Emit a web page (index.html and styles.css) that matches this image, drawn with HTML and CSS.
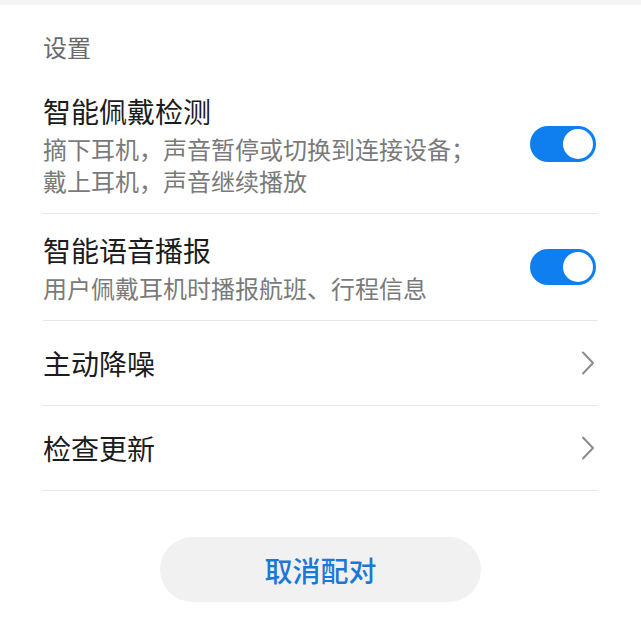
FILE: index.html
```html
<!DOCTYPE html>
<html lang="zh-CN">

<head>
    <meta charset="UTF-8">
    <meta name="viewport" content="width=device-width, initial-scale=1.0">
    <title>设置</title>
    <link rel="stylesheet" href="styles.css">
</head>

<body>
    <div class="topbar"></div>
    <div class="main">
        <h2 class="heading">设置</h2>

        <div class="row">
            <div class="text">
                <div class="title">智能佩戴检测</div>
                <div class="sub">摘下耳机，声音暂停或切换到连接设备；<br>戴上耳机，声音继续播放</div>
            </div>
            <div class="toggle on"><span class="knob"></span></div>
        </div>

        <div class="row">
            <div class="text">
                <div class="title">智能语音播报</div>
                <div class="sub">用户佩戴耳机时播报航班、行程信息</div>
            </div>
            <div class="toggle on"><span class="knob"></span></div>
        </div>

        <div class="row single">
            <div class="title">主动降噪</div>
            <svg class="arrow" width="14" height="24" viewBox="0 0 14 24">
                <path d="M2 1.5 L12 12 L2 22.5" fill="none" stroke="#8c8c8c" stroke-width="2" stroke-linecap="round" stroke-linejoin="round"/>
            </svg>
        </div>

        <div class="row single">
            <div class="title">检查更新</div>
            <svg class="arrow" width="14" height="24" viewBox="0 0 14 24">
                <path d="M2 1.5 L12 12 L2 22.5" fill="none" stroke="#8c8c8c" stroke-width="2" stroke-linecap="round" stroke-linejoin="round"/>
            </svg>
        </div>

        <div class="actions">
            <button class="unpair">取消配对</button>
        </div>
    </div>
</body>

</html>
```

FILE: styles.css
```css
* {
    box-sizing: border-box;
    margin: 0;
    padding: 0;
}

body {
    background-color: #fff;
    font-family: "Noto Sans CJK SC", "Noto Sans", sans-serif;
    width: 641px;
    height: 629px;
    overflow: hidden;
}

.topbar {
    height: 5px;
    background-color: #f4f4f4;
}

.main {
    padding: 26px 43px 0 43px;
}

.heading {
    font-size: 24px;
    font-weight: 400;
    line-height: 32px;
    color: #6a6a6a;
    margin-bottom: 12px;
}

.row {
    display: flex;
    align-items: center;
    justify-content: space-between;
    padding: 16px 0 16px 0;
    border-bottom: 1px solid #e6e6e6;
}

.row.single {
    height: 85px;
    padding: 0;
}

.title {
    font-size: 28px;
    line-height: 40px;
    color: #1c1c1c;
}

.sub {
    margin-top: 2px;
    font-size: 24px;
    line-height: 32px;
    color: #7a7a7a;
}

.toggle {
    width: 66px;
    height: 36px;
    border-radius: 18px;
    background-color: #0f7ff0;
    display: flex;
    align-items: center;
    justify-content: flex-end;
    padding: 0 3px;
    flex-shrink: 0;
    margin-right: 2px;
}

.knob {
    width: 30px;
    height: 30px;
    border-radius: 50%;
    background-color: #fff;
}

.arrow {
    margin-right: 3px;
}

.actions {
    display: flex;
    justify-content: center;
    padding-top: 46px;
}

.unpair {
    width: 321px;
    height: 65px;
    border: none;
    border-radius: 33px;
    background-color: #f1f1f1;
    color: #1a78d6;
    font-family: "Noto Sans CJK SC", "Noto Sans", sans-serif;
    font-size: 28px;
    font-weight: 500;
}
```
